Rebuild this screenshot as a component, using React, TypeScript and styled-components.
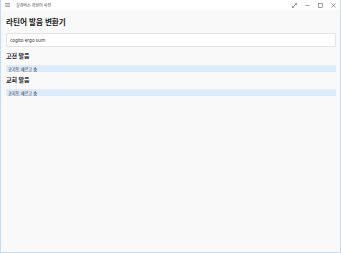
import styled, { createGlobalStyle } from 'styled-components'

const GlobalStyle = createGlobalStyle`
  html, body {
    margin: 0;
    padding: 0;
    background: #f9f9f9;
  }
  * {
    box-sizing: border-box;
  }
`

const Window = styled.div`
  width: 341px;
  height: 253px;
  display: flex;
  flex-direction: column;
  border: 1px solid #c3ddf4;
  border-top: none;
  background: #f9f9f9;
  font-family: 'Noto Sans', 'Noto Sans CJK KR', sans-serif;
  color: #1b1b1b;
  overflow: hidden;
`

const TitleBar = styled.div`
  height: 10px;
  display: flex;
  align-items: center;
  background: #ffffff;
  padding-left: 4px;
`

const TitleText = styled.span`
  font-size: 4px;
  color: #444;
  margin-left: 6px;
  flex: 1;
`

const Controls = styled.div`
  display: flex;
  align-items: center;
  height: 100%;
`

const ControlButton = styled.div`
  width: 13px;
  height: 100%;
  display: flex;
  align-items: center;
  justify-content: center;
`

const Content = styled.main`
  flex: 1;
  display: flex;
  flex-direction: column;
  padding: 7px 4px 0 5px;
`

const Heading = styled.h1`
  margin: 0;
  font-size: 7.6px;
  font-weight: 700;
  line-height: 11px;
  color: #1a1a1a;
`

const Input = styled.input`
  margin-top: 5px;
  height: 14px;
  width: 100%;
  border: 1px solid #e3e3e3;
  border-radius: 2px;
  background: #fff;
  padding: 0 3px;
  font-family: 'Noto Sans', 'Noto Sans CJK KR', sans-serif;
  font-size: 4.6px;
  color: #333;
  outline: none;
`

const SectionTitle = styled.h2<{ $first?: boolean }>`
  margin: 0;
  margin-top: ${(p) => (p.$first ? '5px' : '4px')};
  font-size: 6px;
  font-weight: 700;
  line-height: 8px;
  color: #1d1d1d;
`

const Result = styled.div`
  margin-top: 5px;
  height: 7px;
  display: flex;
  align-items: center;
  padding-left: 2px;
  background: #dcebfb;
  font-size: 4.2px;
  color: #222;
`

function Hamburger() {
  return (
    <svg width="5" height="4" viewBox="0 0 5 4">
      <path d="M0 0.5h5M0 2h5M0 3.5h5" stroke="#555" strokeWidth="0.5" />
    </svg>
  )
}

export default function App() {
  return (
    <>
      <GlobalStyle />
      <Window>
        <TitleBar>
          <Hamburger />
          <TitleText>실라버스 라틴어 사전</TitleText>
          <Controls>
            <ControlButton>
              <svg width="5" height="5" viewBox="0 0 5 5">
                <path d="M0.5 4.5L4.5 0.5M2.8 0.5h1.7v1.7M0.5 2.8v1.7h1.7" stroke="#444" strokeWidth="0.5" fill="none" />
              </svg>
            </ControlButton>
            <ControlButton>
              <svg width="5" height="5" viewBox="0 0 5 5">
                <path d="M0.5 2.5h4" stroke="#444" strokeWidth="0.5" />
              </svg>
            </ControlButton>
            <ControlButton>
              <svg width="5" height="5" viewBox="0 0 5 5">
                <rect x="0.5" y="0.5" width="4" height="4" stroke="#444" strokeWidth="0.5" fill="none" />
              </svg>
            </ControlButton>
            <ControlButton>
              <svg width="5" height="5" viewBox="0 0 5 5">
                <path d="M0.5 0.5l4 4M4.5 0.5l-4 4" stroke="#444" strokeWidth="0.5" />
              </svg>
            </ControlButton>
          </Controls>
        </TitleBar>
        <Content>
          <Heading>라틴어 발음 변환기</Heading>
          <Input defaultValue="cogito ergo sum" />
          <SectionTitle $first>고전 발음</SectionTitle>
          <Result>코기토 에르고 숨</Result>
          <SectionTitle>교회 발음</SectionTitle>
          <Result>코지토 에르고 숨</Result>
        </Content>
      </Window>
    </>
  )
}
